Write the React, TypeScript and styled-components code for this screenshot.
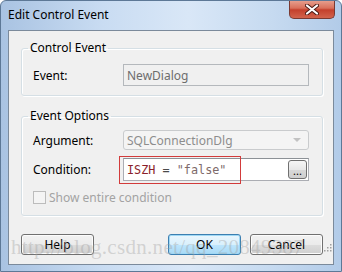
import React from 'react';
import styled, { createGlobalStyle } from 'styled-components';

const GlobalStyle = createGlobalStyle`
  html, body {
    margin: 0;
    padding: 0;
    background: #ffffff;
  }
  body {
    font-family: "Noto Sans", "Open Sans", sans-serif;
    font-size: 12px;
  }
`;

const Window = styled.div`
  position: relative;
  box-sizing: border-box;
  width: 342px;
  height: 272px;
  display: flex;
  flex-direction: column;
  padding: 0 7px 6px 7px;
  background: linear-gradient(to right, #a9c3e2 0%, #c9dcf2 30%, #d9e7f7 55%, #c6daf0 80%, #b2cbe8 100%);
  border: 1px solid #5d7896;
  border-radius: 6px 6px 0 0;
  overflow: hidden;
`;

const TitleBar = styled.div`
  height: 29px;
  display: flex;
  align-items: flex-start;
  justify-content: space-between;
`;

const Title = styled.span`
  margin-top: 6px;
  color: #000000;
  font-size: 12px;
  line-height: 16px;
`;

const CloseButton = styled.div`
  width: 46px;
  height: 19px;
  margin-top: -1px;
  margin-right: -1px;
  display: flex;
  align-items: center;
  justify-content: center;
  border: 1px solid #7a3a32;
  border-top: none;
  border-radius: 0 0 5px 5px;
  background: linear-gradient(to bottom, #e8a493 0%, #d9705b 45%, #c4402c 55%, #d2634c 100%);
  box-sizing: border-box;
`;

const Client = styled.div`
  flex: 1;
  display: flex;
  flex-direction: column;
  box-sizing: border-box;
  padding: 9px 10px 0 12px;
  background: #f0f0f0;
  border: 1px solid #7b8a9b;
`;

const Group = styled.fieldset<{ $gap?: number }>`
  margin: ${(p) => p.$gap || 0}px 0 0 0;
  padding: 0 13px 0 11px;
  border: 1px solid #d5dfe5;
  border-radius: 3px;
  box-shadow: inset 1px 1px 0 #ffffff, 1px 1px 0 #ffffff;
  display: flex;
  flex-direction: column;
`;

const Legend = styled.legend`
  padding: 0 2px;
  margin-left: -5px;
  line-height: 16px;
  font-size: 12px;
  color: #000000;
`;

const Rows = styled.div<{ $top: number; $bottom: number }>`
  display: flex;
  flex-direction: column;
  gap: 8px;
  padding: ${(p) => p.$top}px 0 ${(p) => p.$bottom}px 0;
`;

const Row = styled.div`
  display: flex;
  align-items: center;
`;

const Label = styled.span`
  width: 90px;
  color: #000000;
  font-size: 12px;
`;

const Field = styled.div<{ $height: number }>`
  position: relative;
  flex: 1;
  height: ${(p) => p.$height}px;
  box-sizing: border-box;
  display: flex;
  align-items: center;
`;

const DisabledBox = styled(Field)`
  padding-left: 3px;
  border: 1px solid #b4b8bc;
  background: #f0f0f0;
  color: #6d6d6d;
`;

const DisabledCombo = styled(Field)`
  padding-left: 3px;
  border: 1px solid #c9cbcd;
  border-radius: 3px;
  background: #f4f4f4;
  color: #8d8d8d;
  justify-content: space-between;
`;

const ComboArrow = styled.span`
  width: 0;
  height: 0;
  margin-right: 7px;
  border-left: 4px solid transparent;
  border-right: 4px solid transparent;
  border-top: 4px solid #c2c2c2;
`;

const EditBox = styled(Field)`
  padding-left: 3px;
  border: 1px solid #abadb3;
  border-top-color: #8c9196;
  background: #ffffff;
  justify-content: space-between;
`;

const Code = styled.span`
  font-family: "DejaVu Sans Mono", "Liberation Mono", monospace;
  font-size: 11.8px;
  white-space: pre;
`;

const CodeIdent = styled.span`
  color: #8b1f2b;
`;

const CodeOp = styled.span`
  color: #4a4a4a;
`;

const CodeString = styled.span`
  color: #7d6a6a;
`;

const Highlight = styled.div`
  position: absolute;
  left: -5px;
  top: -3px;
  width: 122px;
  height: 28px;
  box-sizing: border-box;
  border: 1.5px solid #d23b3b;
  pointer-events: none;
`;

const EllipsisButton = styled.div`
  width: 19px;
  height: 19px;
  margin-right: 1px;
  box-sizing: border-box;
  border: 1px solid #707070;
  border-radius: 3px;
  background: linear-gradient(to bottom, #f6f6f6 0%, #e8e8e8 50%, #d8d8d8 51%, #cfcfcf 100%);
  display: flex;
  align-items: flex-end;
  justify-content: center;
  font-size: 11px;
  line-height: 14px;
  color: #000000;
`;

const CheckRow = styled.div`
  display: flex;
  align-items: center;
  gap: 3px;
  color: #a3a3a3;
  font-size: 12px;
`;

const CheckBox = styled.span`
  width: 13px;
  height: 13px;
  box-sizing: border-box;
  border: 1px solid #bcbcbc;
  background: #f4f4f4;
`;

const ButtonBar = styled.div`
  display: flex;
  margin-top: 18px;
`;

const Button = styled.div<{ $default?: boolean; $push?: boolean }>`
  width: 73px;
  height: 21px;
  box-sizing: border-box;
  margin-left: ${(p) => (p.$push ? 'auto' : '0')};
  margin-right: ${(p) => (p.$push ? '9px' : '0')};
  display: flex;
  align-items: center;
  justify-content: center;
  border: 1px solid ${(p) => (p.$default ? '#3c7fb1' : '#707070')};
  border-radius: 3px;
  background: ${(p) =>
    p.$default
      ? 'linear-gradient(to bottom, #eaf6fd 0%, #d9f0fc 50%, #bee6fd 51%, #a7d9f5 100%)'
      : 'linear-gradient(to bottom, #f2f2f2 0%, #ebebeb 50%, #dddddd 51%, #cfcfcf 100%)'};
  box-shadow: inset 0 0 0 1px ${(p) => (p.$default ? '#9fd8f5' : '#fcfcfc')};
  color: #000000;
  font-size: 12px;
`;

const Watermark = styled.div`
  position: absolute;
  left: 10px;
  top: 234px;
  font-family: "Liberation Serif", serif;
  font-size: 21px;
  letter-spacing: 0.3px;
  color: rgba(160, 160, 160, 0.4);
  white-space: nowrap;
  pointer-events: none;
`;

const Grip = styled.svg`
  position: absolute;
  right: 9px;
  bottom: 19px;
`;

function App() {
  return (
    <>
      <GlobalStyle />
      <Window>
        <TitleBar>
          <Title>Edit Control Event</Title>
          <CloseButton>
            <svg width="14" height="11" viewBox="0 0 14 11">
              <path d="M2 1.5 L12 9.5 M12 1.5 L2 9.5" stroke="#4a1a14" strokeWidth="4" strokeLinecap="round" />
              <path d="M2 1.5 L12 9.5 M12 1.5 L2 9.5" stroke="#ffffff" strokeWidth="2.2" strokeLinecap="round" />
            </svg>
          </CloseButton>
        </TitleBar>
        <Client>
          <Group>
            <Legend>Control Event</Legend>
            <Rows $top={8} $bottom={9}>
              <Row>
                <Label>Event:</Label>
                <DisabledBox $height={22}>NewDialog</DisabledBox>
              </Row>
            </Rows>
          </Group>
          <Group $gap={12}>
            <Legend>Event Options</Legend>
            <Rows $top={6} $bottom={9}>
              <Row>
                <Label>Argument:</Label>
                <DisabledCombo $height={20}>
                  <span>SQLConnectionDlg</span>
                  <ComboArrow />
                </DisabledCombo>
              </Row>
              <Row>
                <Label>Condition:</Label>
                <EditBox $height={23}>
                  <Code>
                    <CodeIdent>ISZH</CodeIdent>
                    <CodeOp> = </CodeOp>
                    <CodeString>"false"</CodeString>
                  </Code>
                  <EllipsisButton>...</EllipsisButton>
                  <Highlight />
                </EditBox>
              </Row>
              <CheckRow>
                <CheckBox />
                <span>Show entire condition</span>
              </CheckRow>
            </Rows>
          </Group>
          <ButtonBar>
            <Button>Help</Button>
            <Button $default $push>
              OK
            </Button>
            <Button>Cancel</Button>
          </ButtonBar>
        </Client>
        <Watermark>http://blog.csdn.net/qq_20849387</Watermark>
        <Grip width="8" height="8" viewBox="0 0 8 8">
          <rect x="6" y="0" width="1.5" height="1.5" fill="#a0a0a0" />
          <rect x="3" y="3" width="1.5" height="1.5" fill="#a0a0a0" />
          <rect x="6" y="3" width="1.5" height="1.5" fill="#a0a0a0" />
          <rect x="0" y="6" width="1.5" height="1.5" fill="#a0a0a0" />
          <rect x="3" y="6" width="1.5" height="1.5" fill="#a0a0a0" />
          <rect x="6" y="6" width="1.5" height="1.5" fill="#a0a0a0" />
        </Grip>
      </Window>
    </>
  );
}

export default App;
